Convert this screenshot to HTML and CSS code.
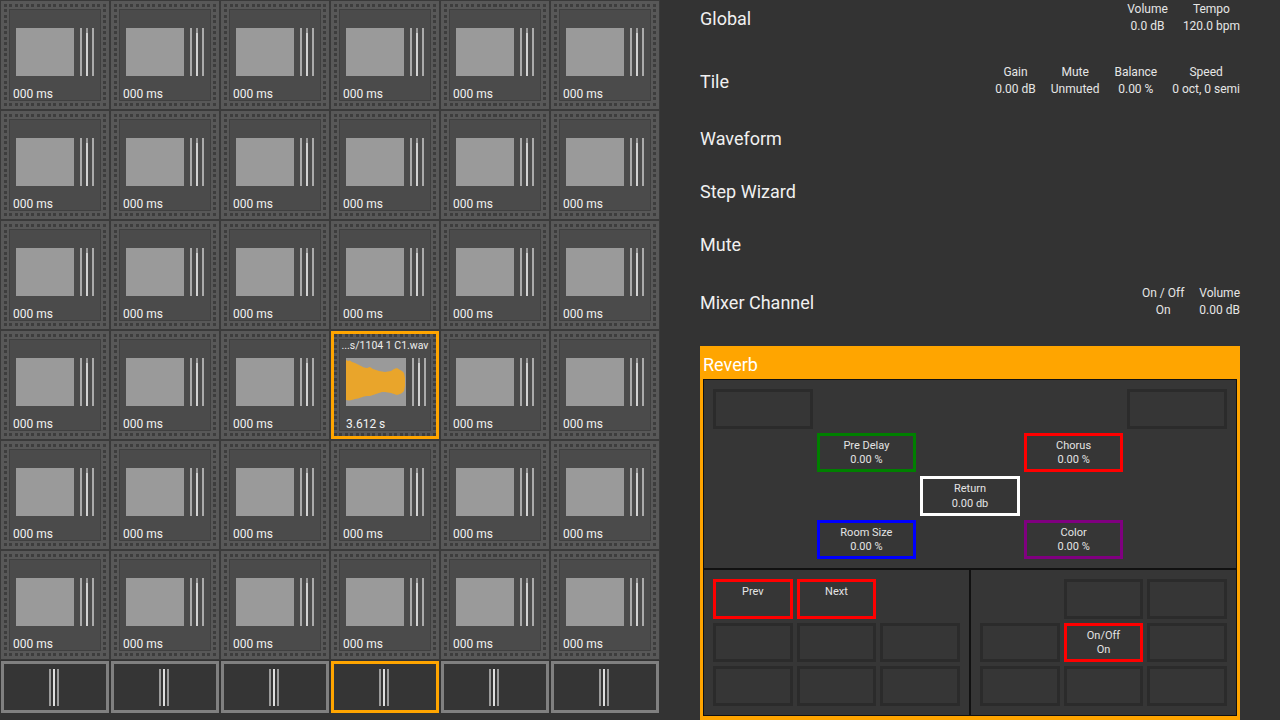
FILE: index.html
```html
<!DOCTYPE html>
<html>
<head>
<meta charset="utf-8">
<link rel="stylesheet" href="styles.css">
</head>
<body>
<div class="app">
  <div class="left">
    <div class="tiles">
      <div class="tile"><div class="tile-inner"><div class="tile-name"></div><div class="wave"><div class="wave-box"></div><div class="meter"><i></i><i class="mid"></i><i></i></div></div><div class="tile-time">000 ms</div></div></div>
      <div class="tile"><div class="tile-inner"><div class="tile-name"></div><div class="wave"><div class="wave-box"></div><div class="meter"><i></i><i class="mid"></i><i></i></div></div><div class="tile-time">000 ms</div></div></div>
      <div class="tile"><div class="tile-inner"><div class="tile-name"></div><div class="wave"><div class="wave-box"></div><div class="meter"><i></i><i class="mid"></i><i></i></div></div><div class="tile-time">000 ms</div></div></div>
      <div class="tile"><div class="tile-inner"><div class="tile-name"></div><div class="wave"><div class="wave-box"></div><div class="meter"><i></i><i class="mid"></i><i></i></div></div><div class="tile-time">000 ms</div></div></div>
      <div class="tile"><div class="tile-inner"><div class="tile-name"></div><div class="wave"><div class="wave-box"></div><div class="meter"><i></i><i class="mid"></i><i></i></div></div><div class="tile-time">000 ms</div></div></div>
      <div class="tile"><div class="tile-inner"><div class="tile-name"></div><div class="wave"><div class="wave-box"></div><div class="meter"><i></i><i class="mid"></i><i></i></div></div><div class="tile-time">000 ms</div></div></div>

      <div class="tile"><div class="tile-inner"><div class="tile-name"></div><div class="wave"><div class="wave-box"></div><div class="meter"><i></i><i class="mid"></i><i></i></div></div><div class="tile-time">000 ms</div></div></div>
      <div class="tile"><div class="tile-inner"><div class="tile-name"></div><div class="wave"><div class="wave-box"></div><div class="meter"><i></i><i class="mid"></i><i></i></div></div><div class="tile-time">000 ms</div></div></div>
      <div class="tile"><div class="tile-inner"><div class="tile-name"></div><div class="wave"><div class="wave-box"></div><div class="meter"><i></i><i class="mid"></i><i></i></div></div><div class="tile-time">000 ms</div></div></div>
      <div class="tile"><div class="tile-inner"><div class="tile-name"></div><div class="wave"><div class="wave-box"></div><div class="meter"><i></i><i class="mid"></i><i></i></div></div><div class="tile-time">000 ms</div></div></div>
      <div class="tile"><div class="tile-inner"><div class="tile-name"></div><div class="wave"><div class="wave-box"></div><div class="meter"><i></i><i class="mid"></i><i></i></div></div><div class="tile-time">000 ms</div></div></div>
      <div class="tile"><div class="tile-inner"><div class="tile-name"></div><div class="wave"><div class="wave-box"></div><div class="meter"><i></i><i class="mid"></i><i></i></div></div><div class="tile-time">000 ms</div></div></div>

      <div class="tile"><div class="tile-inner"><div class="tile-name"></div><div class="wave"><div class="wave-box"></div><div class="meter"><i></i><i class="mid"></i><i></i></div></div><div class="tile-time">000 ms</div></div></div>
      <div class="tile"><div class="tile-inner"><div class="tile-name"></div><div class="wave"><div class="wave-box"></div><div class="meter"><i></i><i class="mid"></i><i></i></div></div><div class="tile-time">000 ms</div></div></div>
      <div class="tile"><div class="tile-inner"><div class="tile-name"></div><div class="wave"><div class="wave-box"></div><div class="meter"><i></i><i class="mid"></i><i></i></div></div><div class="tile-time">000 ms</div></div></div>
      <div class="tile"><div class="tile-inner"><div class="tile-name"></div><div class="wave"><div class="wave-box"></div><div class="meter"><i></i><i class="mid"></i><i></i></div></div><div class="tile-time">000 ms</div></div></div>
      <div class="tile"><div class="tile-inner"><div class="tile-name"></div><div class="wave"><div class="wave-box"></div><div class="meter"><i></i><i class="mid"></i><i></i></div></div><div class="tile-time">000 ms</div></div></div>
      <div class="tile"><div class="tile-inner"><div class="tile-name"></div><div class="wave"><div class="wave-box"></div><div class="meter"><i></i><i class="mid"></i><i></i></div></div><div class="tile-time">000 ms</div></div></div>

      <div class="tile"><div class="tile-inner"><div class="tile-name"></div><div class="wave"><div class="wave-box"></div><div class="meter"><i></i><i class="mid"></i><i></i></div></div><div class="tile-time">000 ms</div></div></div>
      <div class="tile"><div class="tile-inner"><div class="tile-name"></div><div class="wave"><div class="wave-box"></div><div class="meter"><i></i><i class="mid"></i><i></i></div></div><div class="tile-time">000 ms</div></div></div>
      <div class="tile"><div class="tile-inner"><div class="tile-name"></div><div class="wave"><div class="wave-box"></div><div class="meter"><i></i><i class="mid"></i><i></i></div></div><div class="tile-time">000 ms</div></div></div>
      <div class="tile tile--selected"><div class="tile-inner"><div class="tile-name">...s/1104 1 C1.wav</div><div class="wave"><div class="wave-box"><svg class="wave-svg" viewBox="0 0 60 48" width="60" height="48"><path fill="#e9a52b" d="M0,2 L2,3 L4,2.5 L6,4 L9,5 L12,6.5 L15,8 L18,9.5 L21,10 L24,9 L27,11 L30,12 L33,13 L36,13.5 L39,14 L42,13.5 L45,13 L48,11 L51,10 L54,12 L56,13 L58,15 L59,20 L59,28 L58,33 L56,35 L54,36 L51,37 L48,36 L45,35 L42,34.5 L39,34 L36,34 L33,35 L30,36 L27,37 L24,38 L21,38 L18,38.5 L15,39.5 L12,40.5 L9,41 L6,42 L3,42.5 L0,42 Z"/></svg></div><div class="meter"><i></i><i class="mid"></i><i></i></div></div><div class="tile-time tile-time--sel">3.612 s</div></div></div>
      <div class="tile"><div class="tile-inner"><div class="tile-name"></div><div class="wave"><div class="wave-box"></div><div class="meter"><i></i><i class="mid"></i><i></i></div></div><div class="tile-time">000 ms</div></div></div>
      <div class="tile"><div class="tile-inner"><div class="tile-name"></div><div class="wave"><div class="wave-box"></div><div class="meter"><i></i><i class="mid"></i><i></i></div></div><div class="tile-time">000 ms</div></div></div>

      <div class="tile"><div class="tile-inner"><div class="tile-name"></div><div class="wave"><div class="wave-box"></div><div class="meter"><i></i><i class="mid"></i><i></i></div></div><div class="tile-time">000 ms</div></div></div>
      <div class="tile"><div class="tile-inner"><div class="tile-name"></div><div class="wave"><div class="wave-box"></div><div class="meter"><i></i><i class="mid"></i><i></i></div></div><div class="tile-time">000 ms</div></div></div>
      <div class="tile"><div class="tile-inner"><div class="tile-name"></div><div class="wave"><div class="wave-box"></div><div class="meter"><i></i><i class="mid"></i><i></i></div></div><div class="tile-time">000 ms</div></div></div>
      <div class="tile"><div class="tile-inner"><div class="tile-name"></div><div class="wave"><div class="wave-box"></div><div class="meter"><i></i><i class="mid"></i><i></i></div></div><div class="tile-time">000 ms</div></div></div>
      <div class="tile"><div class="tile-inner"><div class="tile-name"></div><div class="wave"><div class="wave-box"></div><div class="meter"><i></i><i class="mid"></i><i></i></div></div><div class="tile-time">000 ms</div></div></div>
      <div class="tile"><div class="tile-inner"><div class="tile-name"></div><div class="wave"><div class="wave-box"></div><div class="meter"><i></i><i class="mid"></i><i></i></div></div><div class="tile-time">000 ms</div></div></div>

      <div class="tile"><div class="tile-inner"><div class="tile-name"></div><div class="wave"><div class="wave-box"></div><div class="meter"><i></i><i class="mid"></i><i></i></div></div><div class="tile-time">000 ms</div></div></div>
      <div class="tile"><div class="tile-inner"><div class="tile-name"></div><div class="wave"><div class="wave-box"></div><div class="meter"><i></i><i class="mid"></i><i></i></div></div><div class="tile-time">000 ms</div></div></div>
      <div class="tile"><div class="tile-inner"><div class="tile-name"></div><div class="wave"><div class="wave-box"></div><div class="meter"><i></i><i class="mid"></i><i></i></div></div><div class="tile-time">000 ms</div></div></div>
      <div class="tile"><div class="tile-inner"><div class="tile-name"></div><div class="wave"><div class="wave-box"></div><div class="meter"><i></i><i class="mid"></i><i></i></div></div><div class="tile-time">000 ms</div></div></div>
      <div class="tile"><div class="tile-inner"><div class="tile-name"></div><div class="wave"><div class="wave-box"></div><div class="meter"><i></i><i class="mid"></i><i></i></div></div><div class="tile-time">000 ms</div></div></div>
      <div class="tile"><div class="tile-inner"><div class="tile-name"></div><div class="wave"><div class="wave-box"></div><div class="meter"><i></i><i class="mid"></i><i></i></div></div><div class="tile-time">000 ms</div></div></div>
    </div>
    <div class="tracks">
      <div class="track-cell"><div class="track"><div class="track-lines"><i></i><i class="mid"></i><i></i></div></div></div>
      <div class="track-cell"><div class="track"><div class="track-lines"><i></i><i class="mid"></i><i></i></div></div></div>
      <div class="track-cell"><div class="track"><div class="track-lines"><i></i><i class="mid"></i><i></i></div></div></div>
      <div class="track-cell"><div class="track track--selected"><div class="track-lines"><i></i><i class="mid"></i><i></i></div></div></div>
      <div class="track-cell"><div class="track"><div class="track-lines"><i></i><i class="mid"></i><i></i></div></div></div>
      <div class="track-cell"><div class="track"><div class="track-lines"><i></i><i class="mid"></i><i></i></div></div></div>
    </div>
  </div>

  <div class="panel">
    <div class="section section--global">
      <div class="section-title">Global</div>
      <div class="stats">
        <div class="stat"><div>Volume</div><div>0.0 dB</div></div>
        <div class="stat"><div>Tempo</div><div>120.0 bpm</div></div>
      </div>
    </div>
    <div class="section section--tall">
      <div class="section-title">Tile</div>
      <div class="stats">
        <div class="stat"><div>Gain</div><div>0.00 dB</div></div>
        <div class="stat"><div>Mute</div><div>Unmuted</div></div>
        <div class="stat"><div>Balance</div><div>0.00 %</div></div>
        <div class="stat"><div>Speed</div><div>0 oct, 0 semi</div></div>
      </div>
    </div>
    <div class="section"><div class="section-title">Waveform</div></div>
    <div class="section"><div class="section-title">Step Wizard</div></div>
    <div class="section"><div class="section-title">Mute</div></div>
    <div class="section section--mixer">
      <div class="section-title">Mixer Channel</div>
      <div class="stats">
        <div class="stat"><div>On / Off</div><div>On</div></div>
        <div class="stat"><div>Volume</div><div>0.00 dB</div></div>
      </div>
    </div>

    <div class="reverb">
      <div class="reverb-title">Reverb</div>
      <div class="fx">
        <div class="box"></div><div></div><div></div><div></div><div class="box"></div>
        <div></div><div class="box box--green">Pre Delay<br>0.00 %</div><div></div><div class="box box--red">Chorus<br>0.00 %</div><div></div>
        <div></div><div></div><div class="box box--white">Return<br>0.00 db</div><div></div><div></div>
        <div></div><div class="box box--blue">Room Size<br>0.00 %</div><div></div><div class="box box--purple">Color<br>0.00 %</div><div></div>
      </div>
      <div class="pads">
        <div class="pad">
          <div class="box box--red">Prev</div><div class="box box--red">Next</div><div></div>
          <div class="box"></div><div class="box"></div><div class="box"></div>
          <div class="box"></div><div class="box"></div><div class="box"></div>
        </div>
        <div class="pad">
          <div></div><div class="box"></div><div class="box"></div>
          <div class="box"></div><div class="box box--red">On/Off<br>On</div><div class="box"></div>
          <div class="box"></div><div class="box"></div><div class="box"></div>
        </div>
      </div>
    </div>
  </div>
</div>
</body>
</html>
```

FILE: styles.css
```css
html, body {
  margin: 0;
  padding: 0;
}
body {
  background: #333333;
  font-family: Roboto, "Noto Sans", "Liberation Sans", sans-serif;
  color: #eeeeee;
  width: 1280px;
  height: 720px;
  overflow: hidden;
}
.app {
  display: flex;
  height: 720px;
}
.left {
  width: 660px;
  flex: none;
}
.tiles {
  display: grid;
  grid-template-columns: repeat(6, 110px);
  grid-auto-rows: 110px;
}
.tile {
  box-sizing: border-box;
  border: 1px solid #3a3a3a;
  padding: 8px;
  background-color: #3d3d3d;
  background-image:
    repeating-linear-gradient(90deg, transparent -2.5px 0.5px, #585858 0.5px 3px),
    repeating-linear-gradient(180deg, transparent -2.5px 0.5px, #585858 0.5px 3px);
  box-shadow: inset 0 0 0 1px #585858;
}
.tile--selected {
  box-shadow: inset 0 0 0 3px #ffa500;
}
.tile-inner {
  box-sizing: border-box;
  height: 100%;
  border: 1px solid #404040;
  background: #4b4b4b;
  padding: 0 6px;
}
.tile-name {
  height: 18px;
  font-size: 10.5px;
  line-height: 12px;
  text-align: center;
  white-space: nowrap;
  margin: 0 -6px;
  color: #eeeeee;
}
.wave {
  display: flex;
  height: 48px;
}
.wave-box {
  width: 60px;
  height: 48px;
  background: #9a9a9a;
}
.wave-svg {
  display: block;
}
.meter {
  display: flex;
  gap: 4px;
  margin-left: 6px;
}
.meter i {
  display: block;
  width: 2px;
  height: 48px;
  background: #ababab;
}
.meter i.mid {
  background: linear-gradient(#9c9c9c 0 5px, #d2d2d2 5px);
}
.tile-time {
  margin-top: 12px;
  margin-left: -3px;
  font-size: 12px;
  line-height: 13px;
  color: #f2f2f2;
  white-space: nowrap;
}
.tile-time--sel {
  margin-left: 0;
}
.tracks {
  display: grid;
  grid-template-columns: repeat(6, 110px);
  height: 55px;
}
.track-cell {
  padding: 1px;
}
.track {
  box-sizing: border-box;
  height: 52px;
  border: 3px solid #808080;
  background: #353535;
  display: flex;
  align-items: center;
  justify-content: center;
}
.track--selected {
  border-color: #ffa500;
}
.track-lines {
  display: flex;
  gap: 2px;
  margin-right: 2px;
}
.track-lines i {
  display: block;
  width: 2px;
  height: 37px;
  background: #9a9a9a;
}
.track-lines i.mid {
  background: #dedede;
}

.panel {
  margin-left: 40px;
  width: 540px;
  flex: none;
  display: flex;
  flex-direction: column;
}
.section {
  display: flex;
  align-items: center;
  justify-content: space-between;
  height: 53px;
  flex: none;
}
.section--global {
  height: 36px;
  margin-bottom: 14px;
}
.section--tall {
  height: 62px;
}
.section--mixer {
  height: 62px;
  margin-bottom: 13px;
}
.section-title {
  font-size: 18px;
  color: #f0f0f0;
}
.stats {
  display: flex;
  gap: 15px;
  font-size: 12px;
  line-height: 17px;
  text-align: center;
  color: #e6e6e6;
}
.stat {
  white-space: nowrap;
}

.reverb {
  box-sizing: border-box;
  height: 374px;
  background: #ffa500;
  padding: 0 3px 4px;
  flex: none;
}
.reverb-title {
  height: 33px;
  box-sizing: border-box;
  padding-top: 4px;
  line-height: 30px;
  font-size: 18px;
  color: #ffffff;
}
.fx {
  height: 170px;
  border: 1px solid #111111;
  padding: 9px;
  background: #363636;
  display: grid;
  grid-template-columns: repeat(5, 1fr);
  grid-template-rows: repeat(4, 1fr);
  gap: 4px;
}
.pads {
  display: flex;
}
.pad {
  flex: 1;
  height: 127px;
  border: 1px solid #111111;
  padding: 9px;
  background: #363636;
  display: grid;
  grid-template-columns: repeat(3, 1fr);
  grid-template-rows: repeat(3, 1fr);
  gap: 4px;
}
.box {
  box-sizing: border-box;
  border: 3px solid #2b2b2b;
  padding-top: 3px;
  font-size: 11px;
  line-height: 14.5px;
  text-align: center;
  color: #e4e4e4;
}
.box--green { border-color: #008000; }
.box--red { border-color: #ff0000; }
.box--white { border-color: #ffffff; }
.box--blue { border-color: #0000ff; }
.box--purple { border-color: #800080; }
```
